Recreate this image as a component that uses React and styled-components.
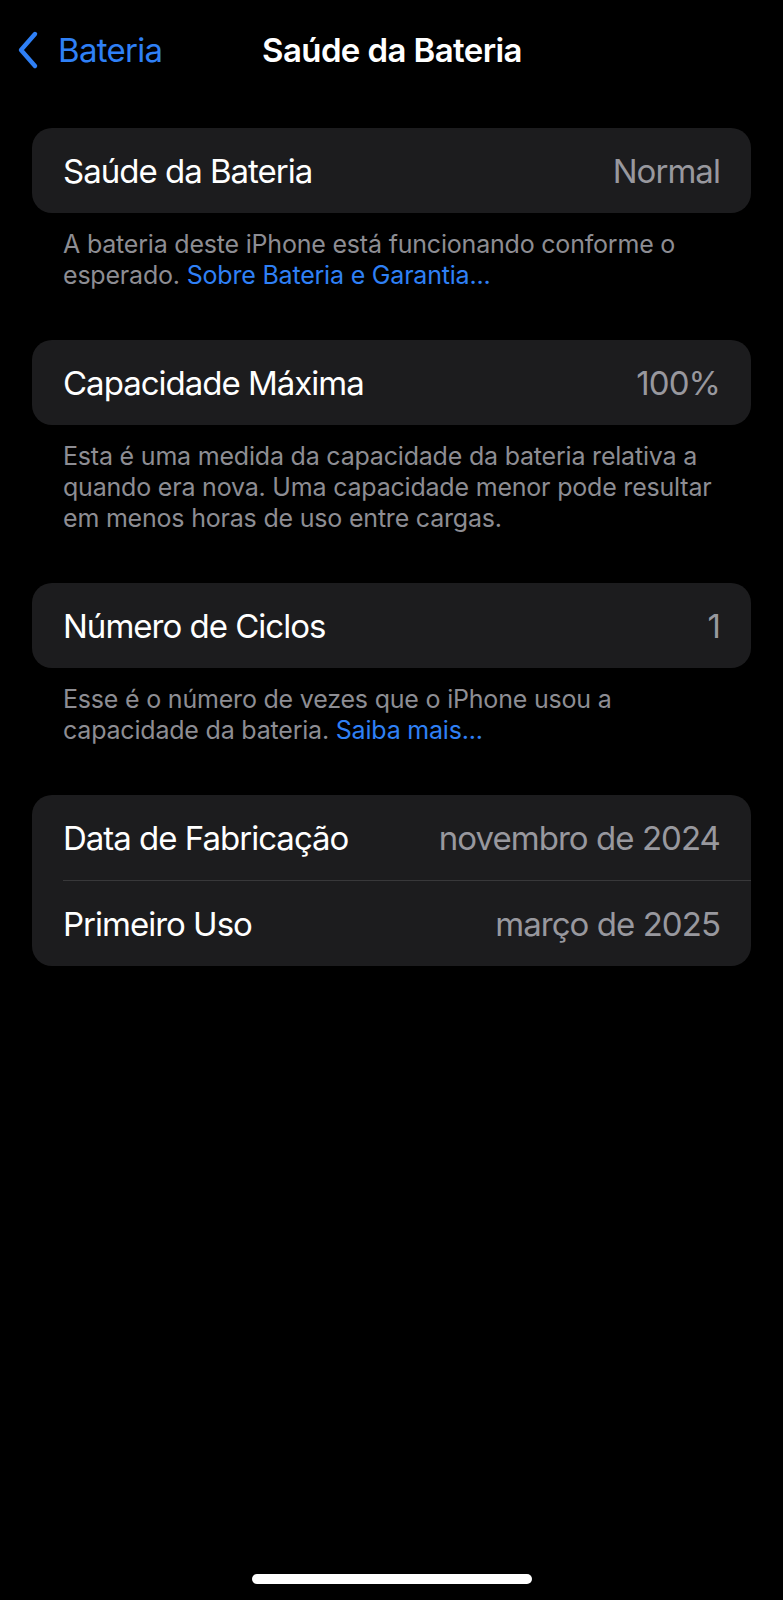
import React from 'react'
import styled, { createGlobalStyle } from 'styled-components'

const Global = createGlobalStyle`
  body {
    margin: 0;
    background: #000;
    font-family: Inter, "Liberation Sans", sans-serif;
    -webkit-font-smoothing: antialiased;
  }
`

const sections = [
  {
    rows: [{ label: 'Saúde da Bateria', value: 'Normal' }],
    note: 'A bateria deste iPhone está funcionando conforme o esperado.',
    link: 'Sobre Bateria e Garantia...'
  },
  {
    rows: [{ label: 'Capacidade Máxima', value: '100%' }],
    note: 'Esta é uma medida da capacidade da bateria relativa a quando era nova. Uma capacidade menor pode resultar em menos horas de uso entre cargas.'
  },
  {
    rows: [{ label: 'Número de Ciclos', value: '1' }],
    note: 'Esse é o número de vezes que o iPhone usou a capacidade da bateria.',
    link: 'Saiba mais...'
  },
  {
    rows: [
      { label: 'Data de Fabricação', value: 'novembro de 2024' },
      { label: 'Primeiro Uso', value: 'março de 2025' }
    ]
  }
]

function App() {
  return (
    <Screen>
      <Global />
      <NavBar>
        <Back>
          <svg width="24" height="40" viewBox="0 0 24 40">
            <path d="M19 4 L5 20 L19 36" fill="none" stroke="#2f80f6" strokeWidth="4.4" strokeLinecap="round" strokeLinejoin="round" />
          </svg>
          <BackText>Bateria</BackText>
        </Back>
        <Title>Saúde da Bateria</Title>
      </NavBar>

      <Content>
        {sections.map((s, i) => (
          <Section key={i}>
            <Card>
              {s.rows.map((r, j) => (
                <Row key={j} $first={j === 0}>
                  <Label>{r.label}</Label>
                  <Value>{r.value}</Value>
                </Row>
              ))}
            </Card>
            {s.note && (
              <Note>
                {s.note}
                {s.link && <> <NoteLink>{s.link}</NoteLink></>}
              </Note>
            )}
          </Section>
        ))}
      </Content>

      <HomeBar />
    </Screen>
  )
}

export default App

const Screen = styled.div`
  width: 783px;
  height: 1600px;
  background: #000;
  display: flex;
  flex-direction: column;
  overflow: hidden;
`

const NavBar = styled.div`
  position: relative;
  height: 100px;
  display: flex;
  align-items: center;
  justify-content: center;
`

const Back = styled.div`
  position: absolute;
  left: 16px;
  top: 30px;
  display: flex;
  align-items: center;
  gap: 18px;
`

const BackText = styled.span`
  color: #2f80f6;
  font-size: 33px;
  letter-spacing: -0.7px;
`

const Title = styled.div`
  color: #fff;
  font-size: 33px;
  font-weight: 600;
  letter-spacing: -0.6px;
  margin-left: 1px;
`

const Content = styled.div`
  flex: 1;
  padding-top: 28px;
  display: flex;
  flex-direction: column;
  gap: 49px;
`

const Section = styled.div`
  display: flex;
  flex-direction: column;
`

const Card = styled.div`
  margin: 0 32px;
  background: #1c1c1e;
  border-radius: 20px;
  overflow: hidden;
`

const Row = styled.div`
  height: 85px;
  margin-left: 31px;
  padding-right: 31px;
  display: flex;
  align-items: center;
  justify-content: space-between;
  border-top: ${p => (p.$first ? 'none' : '1px solid #38383a')};
`

const Label = styled.span`
  color: #fff;
  font-size: 33px;
  letter-spacing: -1px;
`

const Value = styled.span`
  color: #98989e;
  font-size: 33px;
  letter-spacing: -0.95px;
`

const Note = styled.div`
  margin-top: 16px;
  padding: 0 40px 0 63px;
  color: #8d8d93;
  font-size: 25px;
  line-height: 31px;
  letter-spacing: -0.2px;
`

const NoteLink = styled.span`
  color: #2f80f6;
`

const HomeBar = styled.div`
  align-self: center;
  width: 280px;
  height: 10px;
  border-radius: 5px;
  background: #fff;
  margin-bottom: 16px;
`
